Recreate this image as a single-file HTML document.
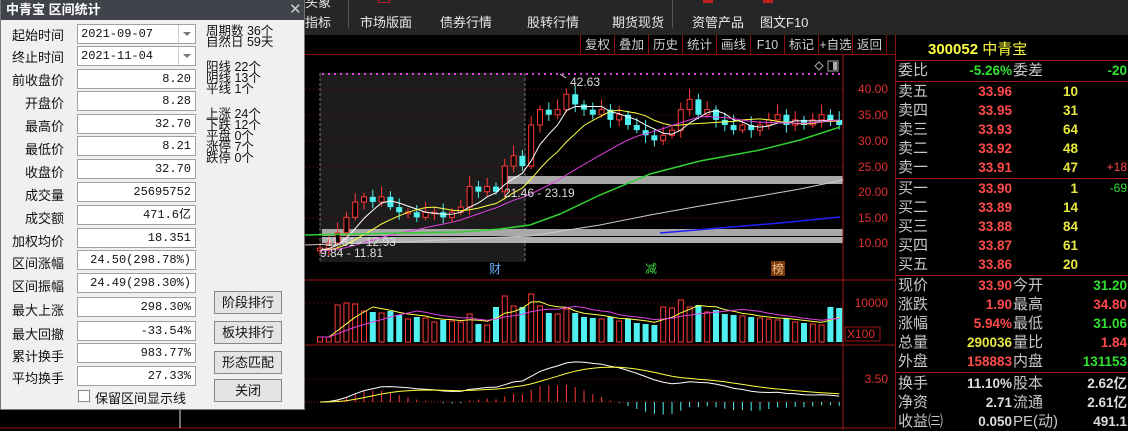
<!DOCTYPE html>
<html><head><meta charset="utf-8">
<style>
*{margin:0;padding:0;box-sizing:border-box}
body{width:1128px;height:430px;background:#000;position:relative;overflow:hidden;font-family:"Liberation Sans","Noto Sans CJK SC",sans-serif}
.abs{position:absolute;white-space:nowrap}
#tb{position:absolute;left:0;top:0;width:1128px;height:35px;background:#262626}
#tb span{position:absolute;top:12px;color:#e8e8e8;font-size:13px}
#tb2{position:absolute;left:305px;top:35px;width:590px;height:20px;background:#000;border-bottom:1px solid #8a1010}
.bt{position:absolute;top:0;height:20px;color:#cfcfcf;font-size:12.5px;line-height:20px;border-left:1px solid #8a1010;text-align:center}
#dlg{position:absolute;left:0;top:0;width:305px;height:410px;background:#f0f0f0;border:1px solid #777;border-top:none}
#ttl{height:20px;background:#40444a;color:#fff;font-size:13px;font-weight:bold;line-height:20px;padding-left:5px}
.lb{position:absolute;right:240px;font-size:13px;color:#111}
.ip{position:absolute;left:76px;width:119px;height:20px;background:#fff;border:1px solid #a0a0a0;font-family:"Liberation Mono","Noto Sans CJK SC",monospace;font-size:12px;line-height:18px;text-align:right;padding-right:4px;color:#111}
.cb{text-align:left;padding-left:3px}
.cb i{position:absolute;right:0;top:0;width:17px;height:18px;border-left:1px solid #ccc}
.cb i:after{content:"";position:absolute;left:4px;top:7px;border:4px solid transparent;border-top:4px solid #777}
.st{position:absolute;left:205px;font-size:12.5px;line-height:11px;color:#111}
.btn{position:absolute;left:213px;width:68px;height:23px;border:1px solid #888;background:#e4e4e4;font-size:13px;text-align:center;line-height:21px;color:#111}
#rp{position:absolute;left:895px;top:35px;width:233px;height:395px;background:#000;border-left:1px solid #8a1010}
.r{position:absolute;left:2px;font-size:15px;color:#c8c8c8;height:19px;line-height:19px}
.v{position:absolute;font-size:13.5px;font-weight:bold;text-align:right;height:19px;line-height:19px}
.hl{position:absolute;left:0;width:233px;height:1px;background:#a01818}
.ax{position:absolute;font-size:12px;color:#e03030;text-align:right;width:50px}
</style></head><body>

<div id="tb">
<span style="left:305px;top:-8px">头象</span>
<span style="left:305px">指标</span>
<span style="left:360px">市场版面</span>
<span style="left:440px">债券行情</span>
<span style="left:527px">股转行情</span>
<span style="left:612px">期货现货</span>
<span style="left:692px">资管产品</span>
<span style="left:760px">图文F10</span>
<div class="abs" style="left:348px;top:0;width:1px;height:28px;background:#555"></div>
<div class="abs" style="left:672px;top:0;width:1px;height:28px;background:#555"></div>
<div class="abs" style="left:703px;top:0;width:10px;height:3px;background:#c02020"></div>
<div class="abs" style="left:763px;top:0;width:10px;height:3px;background:#c02020"></div>
<div class="abs" style="left:378px;top:0;width:12px;height:3px;border:1px solid #c02020;border-top:none"></div>
</div>

<div id="tb2">
<div class="bt" style="left:275px;width:34px">复权</div>
<div class="bt" style="left:309px;width:34px">叠加</div>
<div class="bt" style="left:343px;width:34px">历史</div>
<div class="bt" style="left:377px;width:34px">统计</div>
<div class="bt" style="left:411px;width:34px">画线</div>
<div class="bt" style="left:445px;width:34px">F10</div>
<div class="bt" style="left:479px;width:34px">标记</div>
<div class="bt" style="left:513px;width:34px">+自选</div>
<div class="bt" style="left:547px;width:34px">返回</div>
<div class="bt" style="left:581px;width:9px"></div>
</div>

<svg class="abs" style="left:0;top:0" width="895" height="430" id="ch">
<rect x="320" y="73" width="205" height="189" fill="#1c1c1c"/>
<line x1="320" y1="73" x2="320" y2="262" stroke="#777" stroke-dasharray="3,2"/>
<line x1="525" y1="73" x2="525" y2="262" stroke="#777" stroke-dasharray="3,2"/>
<g stroke="#7a1515" stroke-dasharray="1,3">
<line x1="305" y1="89" x2="843" y2="89"/><line x1="305" y1="115" x2="843" y2="115"/>
<line x1="305" y1="141" x2="843" y2="141"/><line x1="305" y1="167" x2="843" y2="167"/>
<line x1="305" y1="192" x2="843" y2="192"/><line x1="305" y1="218" x2="843" y2="218"/>
<line x1="305" y1="243" x2="843" y2="243"/>
<line x1="305" y1="303" x2="843" y2="303"/><line x1="305" y1="379" x2="843" y2="379"/>
</g>
<line x1="322" y1="74" x2="843" y2="74" stroke="#e040e0" stroke-width="2" stroke-dasharray="2,4"/>
<rect x="505" y="176" width="338" height="8" fill="#a8a8a8"/>
<rect x="322" y="229" width="521" height="7" fill="#a8a8a8"/>
<rect x="322" y="237" width="521" height="6" fill="#b0b0b0"/>
<line x1="305" y1="236.5" x2="843" y2="236.5" stroke="#000"/>
<line x1="305" y1="280" x2="895" y2="280" stroke="#a01818"/>
<line x1="305" y1="345" x2="895" y2="345" stroke="#a01818"/>
<line x1="305" y1="428" x2="895" y2="428" stroke="#a01818"/>
<line x1="0" y1="428" x2="305" y2="428" stroke="#a01818"/>
<line x1="180" y1="410" x2="180" y2="428" stroke="#ddd"/>
<line x1="843" y1="55" x2="843" y2="430" stroke="#a01818"/>
<line x1="305" y1="402" x2="843" y2="402" stroke="#a01818" stroke-dasharray="1,2"/>
<g id="dyn"></g>
<text x="570" y="86" fill="#ddd" font-size="12" font-family="Liberation Sans">42.63</text>
<polyline points="566,78 560,74" stroke="#ddd" fill="none"/>
<text x="504" y="197" fill="#ddd" font-size="12" font-family="Liberation Sans">21.46 - 23.19</text>
<text x="326" y="246" fill="#ddd" font-size="12" font-family="Liberation Sans">11.81 - 12.93</text>
<text x="320" y="257" fill="#ddd" font-size="12" font-family="Liberation Sans">9.84 - 11.81</text>
<text x="489" y="273" fill="#6ab0ff" font-size="12" font-family="Noto Sans CJK SC">财</text>
<rect x="771" y="261" width="14" height="15" fill="#7a3a10"/>
<text x="645" y="273" fill="#3cd23c" font-size="12" font-family="Noto Sans CJK SC">减</text>
<text x="772" y="273" fill="#f0c080" font-size="12" font-family="Noto Sans CJK SC">榜</text>
<path d="M815 66l4-4 4 4-4 4z" fill="none" stroke="#aaa"/>
<rect x="828" y="61" width="10" height="10" fill="none" stroke="#aaa"/><rect x="833" y="62" width="4" height="8" fill="#aaa"/>
<rect x="845" y="327" width="35" height="14" fill="none" stroke="#a01818"/>
<text x="847" y="338" fill="#e03030" font-size="12" font-family="Liberation Sans">X100</text>
</svg>
<div class="ax" style="left:838px;top:82px">40.00</div>
<div class="ax" style="left:838px;top:108px">35.00</div>
<div class="ax" style="left:838px;top:134px">30.00</div>
<div class="ax" style="left:838px;top:160px">25.00</div>
<div class="ax" style="left:838px;top:185px">20.00</div>
<div class="ax" style="left:838px;top:211px">15.00</div>
<div class="ax" style="left:838px;top:236px">10.00</div>
<div class="ax" style="left:838px;top:296px">10000</div>
<div class="ax" style="left:838px;top:372px">3.50</div>

<div id="dlg">
<div id="ttl">中青宝 区间统计<span style="position:absolute;left:288px;top:0;font-weight:normal;color:#ccc;font-size:15px">✕</span></div>
<div class="lb" style="top:25px">起始时间</div><div class="ip cb" style="top:24px">2021-09-07<i></i></div>
<div class="lb" style="top:47px">终止时间</div><div class="ip cb" style="top:46px">2021-11-04<i></i></div>
<div class="lb" style="top:70px">前收盘价</div><div class="ip" style="top:69px">8.20</div>
<div class="lb" style="top:93px">开盘价</div><div class="ip" style="top:91px">8.28</div>
<div class="lb" style="top:116px">最高价</div><div class="ip" style="top:114px">32.70</div>
<div class="lb" style="top:139px">最低价</div><div class="ip" style="top:136px">8.21</div>
<div class="lb" style="top:162px">收盘价</div><div class="ip" style="top:159px">32.70</div>
<div class="lb" style="top:185px">成交量</div><div class="ip" style="top:182px">25695752</div>
<div class="lb" style="top:208px">成交额</div><div class="ip" style="top:205px">471.6亿</div>
<div class="lb" style="top:231px">加权均价</div><div class="ip" style="top:228px">18.351</div>
<div class="lb" style="top:253px">区间涨幅</div><div class="ip" style="top:250px">24.50(298.78%)</div>
<div class="lb" style="top:276px">区间振幅</div><div class="ip" style="top:273px">24.49(298.30%)</div>
<div class="lb" style="top:300px">最大上涨</div><div class="ip" style="top:297px">298.30%</div>
<div class="lb" style="top:324px">最大回撤</div><div class="ip" style="top:321px">-33.54%</div>
<div class="lb" style="top:346px">累计换手</div><div class="ip" style="top:343px">983.77%</div>
<div class="lb" style="top:368px">平均换手</div><div class="ip" style="top:366px">27.33%</div>
<div class="abs" style="left:77px;top:390px;width:12px;height:12px;border:1px solid #888;background:#fff"></div>
<div class="abs" style="left:94px;top:388px;font-size:13px;color:#111">保留区间显示线</div>
<div class="st" style="top:26px">周期数 36个<br>自然日 59天</div>
<div class="st" style="top:62px">阳线 22个<br>阴线 13个<br>平线 1个</div>
<div class="st" style="top:109px">上涨 24个<br>下跌 12个<br>平盘 0个<br>涨停 7个<br>跌停 0个</div>
<div class="btn" style="top:291px">阶段排行</div>
<div class="btn" style="top:321px">板块排行</div>
<div class="btn" style="top:351px">形态匹配</div>
<div class="btn" style="top:379px">关闭</div>
</div>

<div id="rp">
<div class="abs" style="left:32px;top:3px;font-size:15px;color:#ffff40;font-weight:bold">300052 <span style="font-weight:normal">中青宝</span></div>
<div class="hl" style="top:25px"></div>
<div class="r" style="top:26px">委比</div><div class="v" style="left:40px;width:76px;top:26px;color:#30e030">-5.26%</div><div class="r" style="left:117px;top:26px">委差</div><div class="v" style="left:160px;width:71px;top:26px;color:#30e030">-20</div>
<div class="hl" style="top:46px"></div>
<div class="hl" style="top:143px"></div>
<div class="hl" style="top:240px"></div>
<div class="hl" style="top:337px"></div>
</div>

<script>
var rp=document.getElementById('rp');
function add(h){rp.insertAdjacentHTML('beforeend',h);}
var sell=[['卖五','33.96','10',''],['卖四','33.95','31',''],['卖三','33.93','64',''],['卖二','33.92','48',''],['卖一','33.91','47','+18']];
var buy=[['买一','33.90','1','-69'],['买二','33.89','14',''],['买三','33.88','84',''],['买四','33.87','61',''],['买五','33.86','20','']];
function ob(arr,t0){arr.forEach(function(r,i){var t=t0+i*19;
add('<div class="r" style="top:'+t+'px">'+r[0]+'</div><div class="v" style="left:40px;width:76px;top:'+t+'px;color:#ff4a4a">'+r[1]+'</div><div class="v" style="left:130px;width:52px;top:'+t+'px;color:#e8e840">'+r[2]+'</div>'+(r[3]?'<div class="v" style="left:190px;width:41px;top:'+t+'px;font-weight:normal;font-size:12px;color:'+(r[3][0]=='+'?'#ff4a4a':'#30e030')+'">'+r[3]+'</div>':''));});}
ob(sell,47);ob(buy,144);
var q=[['现价','33.90','#ff4a4a','今开','31.20','#30e030'],['涨跌','1.90','#ff4a4a','最高','34.80','#ff4a4a'],['涨幅','5.94%','#ff4a4a','最低','31.06','#30e030'],['总量','290036','#e8e840','量比','1.84','#ff4a4a'],['外盘','158883','#ff4a4a','内盘','131153','#30e030'],
['换手','11.10%','#ddd','股本','2.62亿','#ddd'],['净资','2.71','#ddd','流通','2.61亿','#ddd'],['收益㈢','0.050','#ddd','PE(动)','491.1','#ddd']];
q.forEach(function(r,i){var t=241+i*19+(i>=5?3:0);
add('<div class="r" style="top:'+t+'px">'+r[0]+'</div><div class="v" style="left:40px;width:76px;top:'+t+'px;color:'+r[2]+'">'+r[1]+'</div><div class="r" style="left:117px;top:'+t+'px">'+r[3]+'</div><div class="v" style="left:150px;width:81px;top:'+t+'px;color:'+r[5]+'">'+r[4]+'</div>');});

var C=[9,10,12,15,18,19,18,19,17,16,16,15,16,16,15,16,17,21,20,21,20,25,27,25,33,36,35,36,39,37,36,35,36,34,35,33,32,31,30,31,32,36,38,35,36,34,33,32,33,32,33,34,35,33,34,33,34,35,34,33];
function Y(p){return 243-(p-10)*5.13;}
var s='';var N=C.length;
function X(i){return 320+i*8.8;}
for(var i=0;i<N;i++){var o=i?C[i-1]:8.5,c=C[i];var x=X(i);var hi=Math.max(o,c)+0.8+((i*7)%5)*0.3,lo=Math.min(o,c)-0.6-((i*3)%4)*0.3;
var up=c>=o;var col=up?'#ff3838':'#50f0f0';
s+='<line x1="'+x+'" y1="'+Y(hi)+'" x2="'+x+'" y2="'+Y(lo)+'" stroke="'+col+'"/>';
var y1=Y(Math.max(o,c)),h=Math.max(1.5,Y(Math.min(o,c))-y1);
s+=up?'<rect x="'+(x-2.5)+'" y="'+y1+'" width="5" height="'+h+'" fill="#000" stroke="'+col+'"/>':'<rect x="'+(x-3)+'" y="'+y1+'" width="6" height="'+h+'" fill="'+col+'"/>';}
function ma(n,col){var pts=[];for(var i=0;i<N;i++){var sm=0;for(var k=0;k<n;k++){var j=i-k;sm+=j>=0?C[j]:8.5;}pts.push(X(i)+','+Y(sm/n).toFixed(1));}
s+='<polyline points="'+pts.join(' ')+'" fill="none" stroke="'+col+'"/>';}
ma(5,'#fff');ma(10,'#ffff40');ma(20,'#e040e0');
s+='<polyline points="305,235 400,233 460,232 500,229 530,225 560,214 600,195 650,174 700,161 760,150 800,140 840,127" fill="none" stroke="#30d030" stroke-width="1.5"/>';
s+='<polyline points="305,245 400,242 480,238 530,236 600,225 650,215 700,206 760,196 800,189 843,180" fill="none" stroke="#ccc"/>';
s+='<polyline points="660,233 720,228 780,223 840,217" fill="none" stroke="#2020ff" stroke-width="1.5"/>';
var vm=[],base=342;
for(var i=0;i<N;i++){var up=i==0||C[i]>=C[i-1];var h=14+((i*37)%19)+(Math.abs(C[i]-(i?C[i-1]:8.5))*3);h=Math.min(h,48);if(i<2)h=5;vm.push(h);
var x=X(i);s+=up?'<rect x="'+(x-2.5)+'" y="'+(base-h)+'" width="5" height="'+h+'" fill="#000" stroke="#ff3838"/>':'<rect x="'+(x-3)+'" y="'+(base-h)+'" width="6" height="'+h+'" fill="#50f0f0"/>';}
function vma(n,col){var pts=[];for(var i=0;i<N;i++){var sm=0;for(var k=0;k<n;k++){var j=i-k;sm+=j>=0?vm[j]:5;}pts.push(X(i)+','+(base-sm/n).toFixed(1));}s+='<polyline points="'+pts.join(' ')+'" fill="none" stroke="'+col+'"/>';}
vma(5,'#ffff40');vma(10,'#e040e0');
var e12=C[0],e26=C[0],dea=0,dp=[],ep=[];
for(var i=0;i<N;i++){e12=e12+(C[i]-e12)*2/13;e26=e26+(C[i]-e26)*2/27;var dif=e12-e26;dea=dea+(dif-dea)*0.2;var x=X(i);
var z=402,k=6.5;dp.push(x+','+(z-dif*k).toFixed(1));ep.push(x+','+(z-dea*k).toFixed(1));var m=(dif-dea)*1.6*k;
s+='<line x1="'+x+'" y1="'+z+'" x2="'+x+'" y2="'+(z-m).toFixed(1)+'" stroke="'+(m>0?'#ff3838':'#50f0f0')+'"/>';}
s+='<polyline points="'+dp.join(' ')+'" fill="none" stroke="#fff"/><polyline points="'+ep.join(' ')+'" fill="none" stroke="#ffff40"/>';
document.getElementById('dyn').innerHTML=s;
</script>
</body></html>
